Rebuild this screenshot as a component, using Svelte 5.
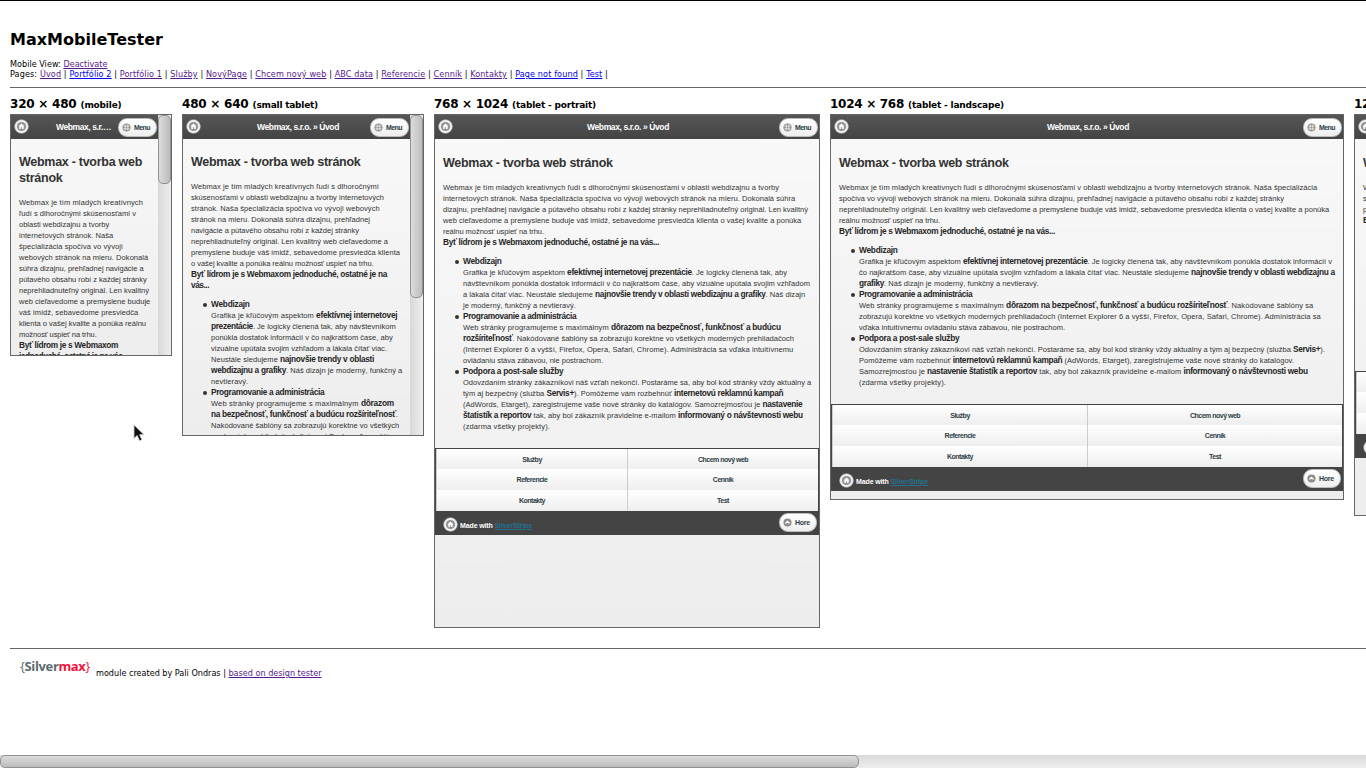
<script>
  // Spreads the letters of a line so that it fills the given width.
  function fit(node, width) {
    const range = document.createRange();
    range.selectNodeContents(node);
    const natural = range.getBoundingClientRect().width;
    const count = node.textContent.length;
    const spacing = `${(width - natural) / count}px`;
    node.style.setProperty('--spacing', spacing);
    node.style.letterSpacing = spacing;
  }

  const parts = (text) => text.split('*').map((value, i) => ({ value, bold: i % 2 === 1 }));

  const pages = [
    ['Úvod', 1], ['Portfólio 2', 0], ['Portfólio 1', 1], ['Služby', 1], ['NovýPage', 1],
    ['Chcem nový web', 1], ['ABC data', 1], ['Referencie', 1], ['Cenník', 1],
    ['Kontakty', 1], ['Page not found', 0], ['Test', 0]
  ];

  const menu = ['Služby', 'Chcem nový web', 'Referencie', 'Cenník', 'Kontakty', 'Test'];

  const frames = [
    {
      size: '320 × 480', kind: '(mobile)', sizeW: 66.5, kindW: 41, w: 162, h: 242, scroll: 69, small: true,
      title: 'Webmax, s.r.…', titleW: 55, inset: 20,
      heading: [[123, 'Webmax - tvorba web'], [43.5, 'stránok']],
      intro: [
        [124, 'Webmax je tím mladých kreatívnych'],
        [117, 'ľudí s dlhoročnými skúsenosťami v'],
        [90.3, 'oblasti webdizajnu a tvorby'],
        [94.3, 'internetových stránok. Naša'],
        [103.7, 'špecializácia spočíva vo vývoji'],
        [129.3, 'webových stránok na mieru. Dokonalá'],
        [124.7, 'súhra dizajnu, prehľadnej navigácie a'],
        [127.7, 'pútavého obsahu robí z každej stránky'],
        [130, 'neprehliadnuteľný originál. Len kvalitný'],
        [131.3, 'web cieľavedome a premyslene buduje'],
        [119.3, 'váš imidž, sebavedome presviedča'],
        [127, 'klienta o vašej kvalite a ponúka reálnu'],
        [77.7, 'možnosť uspieť na trhu.'],
        [99, '*Byť lídrom je s Webmaxom*'],
        [108.7, '*jednoduché, ostatné je na vás...*']
      ],
      list: []
    },
    {
      size: '480 × 640', kind: '(small tablet)', sizeW: 66.5, kindW: 65.5, w: 242, h: 322, scroll: 183, small: true,
      title: 'Webmax, s.r.o. » Úvod', titleW: 82, inset: 25,
      heading: [[169.5, 'Webmax - tvorba web stránok']],
      intro: [
        [187.7, 'Webmax je tím mladých kreatívnych ľudí s dlhoročnými'],
        [193, 'skúsenosťami v oblasti webdizajnu a tvorby internetových'],
        [188.7, 'stránok. Naša špecializácia spočíva vo vývoji webových'],
        [179, 'stránok na mieru. Dokonalá súhra dizajnu, prehľadnej'],
        [168, 'navigácie a pútavého obsahu robí z každej stránky'],
        [197, 'neprehliadnuteľný originál. Len kvalitný web cieľavedome a'],
        [209, 'premyslene buduje váš imidž, sebavedome presviedča klienta'],
        [182.7, 'o vašej kvalite a ponúka reálnu možnosť uspieť na trhu.'],
        [196, '*Byť lídrom je s Webmaxom jednoduché, ostatné je na*'],
        [18, '*vás...*']
      ],
      list: [
        [
          [38.7, '*Webdizajn*'],
          [186.3, 'Grafika je kľúčovým aspektom *efektívnej internetovej*'],
          [184.7, '*prezentácie*. Je logicky členená tak, aby návštevníkom'],
          [181.7, 'ponúkla dostatok informácií v čo najkratšom čase, aby'],
          [176, 'vizuálne upútala svojim vzhľadom a lákala čítať viac.'],
          [163, 'Neustále sledujeme *najnovšie trendy v oblasti*'],
          [191.3, '*webdizajnu a grafiky*. Náš dizajn je moderný, funkčný a'],
          [37.3, 'nevtieravý.']
        ],
        [
          [113.3, '*Programovanie a administrácia*'],
          [183, 'Web stránky programujeme s maximálnym *dôrazom*'],
          [187, '*na bezpečnosť, funkčnosť a budúcu rozšíriteľnosť*.'],
          [188.3, 'Nakódované šablóny sa zobrazujú korektne vo všetkých'],
          [180, 'moderných prehliadačoch (Internet Explorer 6 a vyšší,']
        ]
      ]
    },
    {
      size: '768 × 1024', kind: '(tablet - portrait)', sizeW: 74, kindW: 84, w: 386, h: 514,
      title: 'Webmax, s.r.o. » Úvod', titleW: 82, inset: 24,
      heading: [[169.7, 'Webmax - tvorba web stránok']],
      intro: [
        [336, 'Webmax je tím mladých kreatívnych ľudí s dlhoročnými skúsenosťami v oblasti webdizajnu a tvorby'],
        [352.3, 'internetových stránok. Naša špecializácia spočíva vo vývoji webových stránok na mieru. Dokonalá súhra'],
        [365, 'dizajnu, prehľadnej navigácie a pútavého obsahu robí z každej stránky neprehliadnuteľný originál. Len kvalitný'],
        [358.3, 'web cieľavedome a premyslene buduje váš imidž, sebavedome presviedča klienta o vašej kvalite a ponúka'],
        [101, 'reálnu možnosť uspieť na trhu.'],
        [216, '*Byť lídrom je s Webmaxom jednoduché, ostatné je na vás...*']
      ],
      list: [
        [
          [38.7, '*Webdizajn*'],
          [324, 'Grafika je kľúčovým aspektom *efektívnej internetovej prezentácie*. Je logicky členená tak, aby'],
          [347, 'návštevníkom ponúkla dostatok informácií v čo najkratšom čase, aby vizuálne upútala svojim vzhľadom'],
          [342.3, 'a lákala čítať viac. Neustále sledujeme *najnovšie trendy v oblasti webdizajnu a grafiky*. Náš dizajn'],
          [113, 'je moderný, funkčný a nevtieravý.']
        ],
        [
          [113.3, '*Programovanie a administrácia*'],
          [317.7, 'Web stránky programujeme s maximálnym *dôrazom na bezpečnosť, funkčnosť a budúcu*'],
          [331, '*rozšíriteľnosť*. Nakódované šablóny sa zobrazujú korektne vo všetkých moderných prehliadačoch'],
          [330.3, '(Internet Explorer 6 a vyšší, Firefox, Opera, Safari, Chrome). Administrácia sa vďaka intuitívnemu'],
          [140, 'ovládaniu stáva zábavou, nie postrachom.']
        ],
        [
          [100.3, '*Podpora a post-sale služby*'],
          [348.3, 'Odovzdaním stránky zákazníkovi náš vzťah nekončí. Postaráme sa, aby bol kód stránky vždy aktuálny a'],
          [320.3, 'tým aj bezpečný (služba *Servis+*). Pomôžeme vám rozbehnúť *internetovú reklamnú kampaň*'],
          [339.3, '(AdWords, Etarget), zaregistrujeme vaše nové stránky do katalógov. Samozrejmosťou je *nastavenie*'],
          [339.7, '*štatistík a reportov* tak, aby bol zákazník pravidelne e-mailom *informovaný o návštevnosti webu*'],
          [87, '(zdarma všetky projekty).']
        ]
      ],
      gap: 16
    },
    {
      size: '1024 × 768', kind: '(tablet - landscape)', sizeW: 74, kindW: 96, w: 514, h: 386,
      title: 'Webmax, s.r.o. » Úvod', titleW: 82, inset: 24,
      heading: [[169.7, 'Webmax - tvorba web stránok']],
      intro: [
        [478.3, 'Webmax je tím mladých kreatívnych ľudí s dlhoročnými skúsenosťami v oblasti webdizajnu a tvorby internetových stránok. Naša špecializácia'],
        [445, 'spočíva vo vývoji webových stránok na mieru. Dokonalá súhra dizajnu, prehľadnej navigácie a pútavého obsahu robí z každej stránky'],
        [490.3, 'neprehliadnuteľný originál. Len kvalitný web cieľavedome a premyslene buduje váš imidž, sebavedome presviedča klienta o vašej kvalite a ponúka'],
        [101, 'reálnu možnosť uspieť na trhu.'],
        [216, '*Byť lídrom je s Webmaxom jednoduché, ostatné je na vás...*']
      ],
      list: [
        [
          [38.7, '*Webdizajn*'],
          [473, 'Grafika je kľúčovým aspektom *efektívnej internetovej prezentácie*. Je logicky členená tak, aby návštevníkom ponúkla dostatok informácií v'],
          [475.7, 'čo najkratšom čase, aby vizuálne upútala svojim vzhľadom a lákala čítať viac. Neustále sledujeme *najnovšie trendy v oblasti webdizajnu a*'],
          [180, '*grafiky*. Náš dizajn je moderný, funkčný a nevtieravý.']
        ],
        [
          [113.3, '*Programovanie a administrácia*'],
          [454.3, 'Web stránky programujeme s maximálnym *dôrazom na bezpečnosť, funkčnosť a budúcu rozšíriteľnosť*. Nakódované šablóny sa'],
          [461.7, 'zobrazujú korektne vo všetkých moderných prehliadačoch (Internet Explorer 6 a vyšší, Firefox, Opera, Safari, Chrome). Administrácia sa'],
          [206, 'vďaka intuitívnemu ovládaniu stáva zábavou, nie postrachom.']
        ],
        [
          [100.3, '*Podpora a post-sale služby*'],
          [466, 'Odovzdaním stránky zákazníkovi náš vzťah nekončí. Postaráme sa, aby bol kód stránky vždy aktuálny a tým aj bezpečný (služba *Servis+*).'],
          [435, 'Pomôžeme vám rozbehnúť *internetovú reklamnú kampaň* (AdWords, Etarget), zaregistrujeme vaše nové stránky do katalógov.'],
          [448.7, 'Samozrejmosťou je *nastavenie štatistík a reportov* tak, aby bol zákazník pravidelne e-mailom *informovaný o návštevnosti webu*'],
          [87, '(zdarma všetky projekty).']
        ]
      ],
      gap: 16
    },
    {
      size: '1280 × 800', kind: '(desktop)', sizeW: 74, kindW: 50, w: 642, h: 402,
      title: 'Webmax, s.r.o. » Úvod', titleW: 82, inset: 24,
      heading: [[169.7, 'Webmax - tvorba web stránok']],
      intro: [
        [478.3, 'Webmax je tím mladých kreatívnych ľudí s dlhoročnými skúsenosťami v oblasti webdizajnu a tvorby internetových stránok. Naša špecializácia'],
        [445, 'spočíva vo vývoji webových stránok na mieru. Dokonalá súhra dizajnu, prehľadnej navigácie a'],
        [445, 'pútavého obsahu robí z každej stránky neprehliadnuteľný originál.'],
        [216, '*Byť lídrom je s Webmaxom jednoduché, ostatné je na vás...*']
      ],
      list: [],
      gap: 145
    }
  ];
</script>

{#snippet home()}
  <svg class="home" viewBox="0 0 16 16">
    <circle cx="8" cy="8" r="7.3" fill="#f1f1f1" stroke="#bbb" stroke-width=".6" />
    <circle cx="8" cy="8" r="4.9" fill="#919191" />
    <path d="M8 4.7 4.7 7.9h1v2.7h1.7V8.9h1.2v1.7h1.7V7.9h1z" fill="#fff" />
  </svg>
{/snippet}

{#snippet rows(lines)}
  {#each lines as [width, text]}
    <div class="line"><span use:fit={width}>{#each parts(text) as part}{#if part.bold}<b>{part.value}</b>{:else}{part.value}{/if}{/each}</span></div>
  {/each}
{/snippet}

<div class="page">
  <header class="top">
    <h1><span use:fit={153}>MaxMobileTester</span></h1>
    <div class="info"><span use:fit={97.5}>Mobile View: <a class="seen" href="#top">Deactivate</a></span></div>
    <div class="info"><span use:fit={598}>Pages: {#each pages as [name, seen]}<a class:seen href="#top">{name}</a>{' | '}{/each}</span></div>
  </header>

  <main>
    {#each frames as f}
      <section>
        <h2><span use:fit={f.sizeW}>{f.size}</span><small use:fit={f.kindW}>{f.kind}</small></h2>
        <div class="frame" style="width:{f.w}px;height:{f.h}px">
          <div class="view">
            <div class="bar">
              {@render home()}
              <div class="title" style="padding-left:{f.inset}px"><span use:fit={f.titleW}>{f.title}</span></div>
              <div class="button">
                <svg viewBox="0 0 10 10">
                  <circle cx="5" cy="5" r="4.5" fill="#8d8d8d" />
                  <path d="M3.5 1.5v7M6.5 1.5v7M1.5 3.5h7M1.5 6.5h7" stroke="#f2f2f2" stroke-width=".9" />
                </svg>
                <span use:fit={16}>Menu</span>
              </div>
            </div>
            <div class="content" class:small={f.small}>
              <div class="heading">
                {#each f.heading as [width, text]}<div><span use:fit={width}>{text}</span></div>{/each}
              </div>
              {@render rows(f.intro)}
              {#if f.list.length}
                <ul>
                  {#each f.list as item}<li>{@render rows(item)}</li>{/each}
                </ul>
              {/if}
            </div>
            {#if f.gap}
              <div class="menu" style="margin-top:{f.gap}px">
                {#each menu as name}<div>{name}</div>{/each}
              </div>
              <div class="foot">
                {@render home()}
                <span class="made"><span use:fit={72}>Made with <a href="#top">SilverStripe</a></span></span>
                <div class="button up">
                  <svg viewBox="0 0 10 10">
                    <circle cx="5" cy="5" r="4.5" fill="#8d8d8d" />
                    <path d="M2.7 6.1 5 3.8l2.3 2.3" fill="none" stroke="#fff" stroke-width="1.3" />
                  </svg>
                  <span use:fit={15}>Hore</span>
                </div>
              </div>
            {/if}
          </div>
          {#if f.scroll}
            <div class="track"><div class="thumb" style="height:{f.scroll}px"></div></div>
          {/if}
        </div>
      </section>
    {/each}
  </main>

  <footer>
    <span class="logo"><span use:fit={70}><i>{'{'}</i>Silver<em>max</em><i class="red">{'}'}</i></span></span>
    <span class="credit"><span use:fit={225.5}>module created by Pali Ondras | <a class="seen" href="#top">based on design tester</a></span></span>
  </footer>

  <div class="hscroll"><div></div></div>

  <svg class="cursor" viewBox="0 0 14 20">
    <path d="M1 1v15l3.5-3.2L7 18.5l2.7-1.2-2.5-5.4H12z" fill="#111" stroke="#ddd" stroke-width="1" />
  </svg>
</div>

<style>
  :global(body) { background: #fff; overflow: hidden; }
  .page {
    position: relative;
    box-sizing: border-box;
    width: 1366px;
    height: 768px;
    overflow: hidden;
    border-top: 1px solid #000;
    display: flex;
    flex-direction: column;
    font-family: "DejaVu Sans", sans-serif;
    color: #000;
    white-space: nowrap;
  }
  a { color: #00e; }
  a.seen { color: #551a8b; }
  .top { margin-left: 10px; padding-top: 28px; height: 58px; border-bottom: 1px solid #666; }
  h1 { margin: 0 0 9px; font-size: 16px; line-height: 21px; }
  .info { font: 9px/10px "DejaVu Sans Condensed", "DejaVu Sans", sans-serif; font-stretch: condensed; }

  main { display: flex; align-items: flex-start; gap: 10px; margin-left: 10px; height: 560px; border-bottom: 1px solid #666; }
  section { flex: none; }
  h2 { display: flex; align-items: baseline; gap: 4px; margin: 0; padding-top: 8px; height: 18px; font-size: 12px; line-height: 16px; }
  small { font-size: 9px; font-weight: bold; }
  .frame {
    box-sizing: border-box;
    border: 1px solid #666;
    display: flex;
    overflow: hidden;
    background: linear-gradient(#f9f9f9, #ededed);
    font-family: "Liberation Sans", Arial, sans-serif;
    color: #333;
  }
  .view { flex: 1; min-width: 0; height: 100%; overflow: hidden; }
  .bar { display: flex; align-items: center; height: 24px; padding: 0 1px 0 3px; background: linear-gradient(#565656, #444); }
  .home { flex: none; width: 15px; height: 15px; }
  .bar .home { margin-top: -1px; }
  .title { flex: 1; text-align: center; color: #fff; font-size: 8.5px; line-height: 12px; font-weight: bold; margin-top: -1px; }
  .button {
    flex: none;
    box-sizing: border-box;
    display: flex;
    align-items: center;
    gap: 3px;
    width: 39px;
    height: 19px;
    padding-left: 3px;
    margin-top: 1px;
    border: 1px solid #bbb;
    border-radius: 9px;
    background: linear-gradient(#fff, #eee);
    color: #2f3e46;
    font-size: 7px;
    line-height: 9px;
    font-weight: bold;
  }
  .button svg { flex: none; width: 9px; height: 9px; }
  .content { padding-left: 8px; }
  .heading { padding: 16px 0 11px; font-size: 12.5px; line-height: 16px; font-weight: bold; }
  .small .heading { padding-top: 15px; }
  .line { height: 11px; font-size: 7.5px; line-height: 11px; }
  b { font-size: 8.3px; line-height: 10px; color: #262626; letter-spacing: calc(var(--spacing, 0px) - .36px); }
  ul { list-style: none; margin: 8px 0 0; padding: 0 0 0 20px; }
  li { position: relative; }
  li::before { content: ""; position: absolute; left: -8px; top: 4px; width: 3.5px; height: 3.5px; border-radius: 2px; background: #333; }

  .menu {
    display: grid;
    grid-template-columns: 1fr 1fr;
    grid-template-rows: 20px 21px 21px;
    border: solid #444;
    border-width: 1px 1px 0 1px;
  }
  .menu div {
    display: flex;
    align-items: center;
    justify-content: center;
    border-left: 1px solid #ccc;
    background: linear-gradient(#fff, #eee);
    color: #2f3e46;
    font-size: 7px;
    font-weight: bold;
    letter-spacing: -.5px;
  }
  .foot { display: flex; align-items: center; height: 24px; padding: 0 2px 0 8px; background: #444; color: #fff; font-size: 7px; line-height: 9px; font-weight: bold; }
  .made { flex: 1; margin: 4px 0 0 2px; }
  .foot a { color: #24708f; }
  .foot .home { margin-top: 2px; }
  .up { width: 38px; margin: -2px 0 0; }

  .track { width: 13px; height: 100%; background: linear-gradient(90deg, #d8d8d8, #eee); }
  .thumb { box-sizing: border-box; border: 1px solid #929292; border-radius: 5px; background: linear-gradient(90deg, #dcdcdc, #bcbcbc); }

  footer { display: flex; margin-left: 20px; padding-top: 8px; }
  .logo { width: 76px; font: bold 13px/18px "Open Sans", sans-serif; color: #5d6b70; }
  .logo i { font-style: normal; font-weight: normal; }
  .logo em { font-style: normal; color: #f5123a; }
  .logo .red { color: #f5123a; }
  .credit { margin-top: 10px; font: 9px/12px "DejaVu Sans Condensed", "DejaVu Sans", sans-serif; }

  .hscroll { margin-top: auto; height: 13px; background: linear-gradient(#dadada, #eee); }
  .hscroll div { box-sizing: border-box; width: 859px; height: 13px; border: 1px solid #929292; border-radius: 5px; background: linear-gradient(#dcdcdc, #bcbcbc); }
  .cursor { position: absolute; left: 133px; top: 422px; width: 13px; height: 20px; }
</style>
